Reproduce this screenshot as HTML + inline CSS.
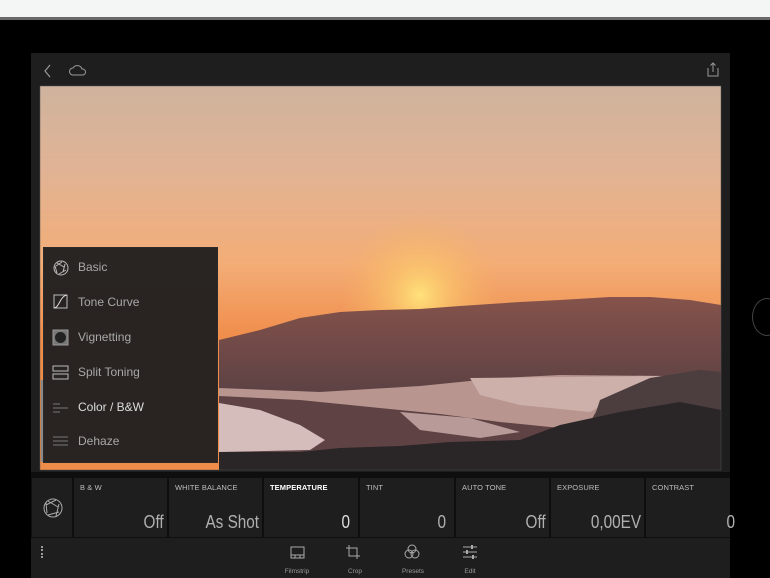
<!DOCTYPE html>
<html><head><meta charset="utf-8"><style>
*{margin:0;padding:0;box-sizing:border-box}
body{width:770px;height:578px;background:#000;position:relative;overflow:hidden;font-family:"Liberation Sans",sans-serif}
.abs{position:absolute}
.tile{position:absolute;top:478px;height:59px;background:#1e1e1e}
.tile .l{position:absolute;left:6px;top:5px;font-size:7.5px;color:#bdbdbd;letter-spacing:.1px}
.tile .v{position:absolute;right:3px;top:34px;font-size:18px;color:#b0b0b0;transform:scaleX(.85);transform-origin:right}
.mi{position:absolute;left:78px;font-size:12px;color:#a8a8a8}
.tb{position:absolute;top:568px;font-size:6.5px;color:#999;width:40px;text-align:center}
</style></head><body>
<div class="abs" style="left:0;top:0;width:770px;height:17px;background:#f4f6f6"></div>
<div class="abs" style="left:0;top:17px;width:770px;height:3px;background:#6a6a6a"></div>
<div class="abs" style="left:752px;top:298px;width:30px;height:38px;border:1.5px solid #444;border-radius:50%"></div>
<div class="abs" style="left:31px;top:53px;width:699px;height:525px;background:#1e1e1e"></div>
<div class="abs" style="left:31px;top:472px;width:699px;height:66px;background:#0e0e0e"></div>
<svg class="abs" style="left:0;top:0" width="770" height="578" viewBox="0 0 770 578">
<defs>
<linearGradient id="sky" x1="0" y1="86" x2="0" y2="340" gradientUnits="userSpaceOnUse">
<stop offset="0" stop-color="#cfb39e"/><stop offset=".35" stop-color="#e2b393"/><stop offset=".7" stop-color="#f3ad76"/><stop offset="1" stop-color="#f08c4a"/></linearGradient>
<radialGradient id="sun" cx="420" cy="295" r="80" gradientUnits="userSpaceOnUse">
<stop offset="0" stop-color="#ffe27a"/><stop offset=".35" stop-color="#fcca6c" stop-opacity=".7"/><stop offset="1" stop-color="#f7b060" stop-opacity="0"/></radialGradient>
<linearGradient id="hill" x1="0" y1="300" x2="0" y2="390" gradientUnits="userSpaceOnUse">
<stop offset="0" stop-color="#84524a"/><stop offset="1" stop-color="#5e4244"/></linearGradient>
</defs>
<rect x="40" y="86" width="681" height="384" fill="url(#sky)"/>
<rect x="40" y="86" width="681" height="384" fill="url(#sun)"/>
<path d="M219 340 L260 330 L300 318 L340 312 L380 310 L420 309 L460 306 L520 302 L560 300 L610 297 L650 297 L690 300 L721 305 L721 470 L219 470Z" fill="url(#hill)"/>
<path d="M219 388 L320 392 L420 386 L500 378 L560 375 L670 376 L630 392 L600 405 L590 422 L560 428 L500 422 L440 414 L360 406 L300 400 L219 396Z" fill="#b8958f"/>
<path d="M470 378 L660 376 L620 395 L590 412 L520 405 L480 395Z" fill="#cdb0aa"/>
<path d="M219 403 L260 410 L300 425 L325 440 L310 450 L219 452Z" fill="#d4bdbb"/>
<path d="M400 412 L470 418 L520 432 L480 438 L420 430Z" fill="#b89b98"/>
<path d="M600 400 L650 378 L700 370 L721 372 L721 470 L580 470 L590 430Z" fill="#4c3d3e"/>
<path d="M219 452 L300 452 L340 448 L400 446 L450 442 L520 440 L560 425 L620 412 L680 402 L721 410 L721 470 L219 470Z" fill="#2a2527"/>
<rect x="40" y="86" width="681" height="384" fill="none" stroke="#555" stroke-width=".5"/>
</svg>
<svg class="abs" style="left:40px;top:62px" width="60" height="20"><path d="M10 3 L5 9 L10 15" stroke="#999" stroke-width="1.2" fill="none"/><path d="M33 13 a3.5 3.5 0 0 1 0-7 a5 5 0 0 1 9 1 a3 3 0 0 1 1 6Z" stroke="#999" stroke-width="1" fill="none"/></svg>
<svg class="abs" style="left:706px;top:62px" width="16" height="16"><path d="M2 6 V14 H12 V6 M7 1 V10 M4.5 3.5 L7 1 L9.5 3.5" stroke="#999" stroke-width="1" fill="none"/></svg>
<div class="abs" style="left:43px;top:247px;width:175px;height:216px;background:rgba(32,31,31,.96);border:1px solid #2a2a2a"></div>
<div class="abs" style="left:41px;top:380px;width:2px;height:82px;background:#888"></div>
<svg class="abs" style="left:50px;top:258px" width="24" height="200" fill="none" stroke="#bbb" stroke-width="1">
<circle cx="11" cy="10" r="7"/><path d="M7 5 L14 9 M15 6 L13 14 M16 12 L9 16 M7 15 L5 8 M6 8 L12 4"/>
<rect x="4" y="37" width="13" height="13"/><path d="M4 50 C9 50 10 38 17 37" stroke="#ddd"/>
<rect x="3" y="72" width="15" height="15" fill="#777" stroke="#999"/><circle cx="10.5" cy="79.5" r="5.5" fill="#222" stroke="none"/>
<rect x="3" y="108" width="15" height="5"/><rect x="3" y="116" width="15" height="5"/>
<path d="M3 146 H10 M3 150 H18 M3 154 H10" stroke="#777"/>
<path d="M3 179 H18 M3 183 H18 M3 187 H18" stroke="#777"/>
</svg>
<div class="mi" style="top:260px">Basic</div>
<div class="mi" style="top:295px">Tone Curve</div>
<div class="mi" style="top:330px">Vignetting</div>
<div class="mi" style="top:365px">Split Toning</div>
<div class="mi" style="top:400px;color:#ddd">Color / B&amp;W</div>
<div class="mi" style="top:434px">Dehaze</div>
<div class="tile" style="left:32px;width:40px"></div>
<svg class="abs" style="left:42px;top:497px" width="22" height="22" fill="none" stroke="#aaa" stroke-width="1"><circle cx="11" cy="11" r="9"/><path d="M6 4 L16 10 M17 7 L14 19 M17 15 L6 18 M5 16 L4 6 M4 8 L14 3"/></svg>
<div class="tile" style="left:74px;width:93px"><div class="l">B &amp; W</div><div class="v">Off</div></div>
<div class="tile" style="left:169px;width:93px"><div class="l">WHITE BALANCE</div><div class="v">As Shot</div></div>
<div class="tile" style="left:264px;width:94px"><div class="l" style="color:#fff;font-weight:bold">TEMPERATURE</div><div class="v" style="right:8px;color:#ddd">0</div></div>
<div class="tile" style="left:360px;width:94px"><div class="l">TINT</div><div class="v" style="right:8px">0</div></div>
<div class="tile" style="left:456px;width:93px"><div class="l">AUTO TONE</div><div class="v">Off</div></div>
<div class="tile" style="left:551px;width:93px"><div class="l">EXPOSURE</div><div class="v">0,00EV</div></div>
<div class="tile" style="left:646px;width:84px"><div class="l">CONTRAST</div><div class="v" style="right:-5px">0</div></div>
<div class="abs" style="left:41px;top:546px;width:2px;height:12px;border-left:2px dotted #999"></div>
<svg class="abs" style="left:285px;top:543px" width="200" height="22" fill="none" stroke="#aaa" stroke-width="1">
<rect x="6" y="4" width="13" height="11"/><path d="M6 12 H19 M10 12 V15 M15 12 V15"/>
<path d="M64 2 V13 H75 M61 5 H72 V16"/>
<circle cx="127" cy="6" r="4"/><circle cx="124" cy="11" r="4"/><circle cx="130" cy="11" r="4"/>
<path d="M178 4 H192 M178 9 H192 M178 14 H192"/><path d="M187 2 V6 M182 7 V11 M188 12 V16" stroke-width="2"/>
</svg>
<div class="tb" style="left:277px">Filmstrip</div>
<div class="tb" style="left:335px">Crop</div>
<div class="tb" style="left:393px">Presets</div>
<div class="tb" style="left:450px">Edit</div>
</body></html>
